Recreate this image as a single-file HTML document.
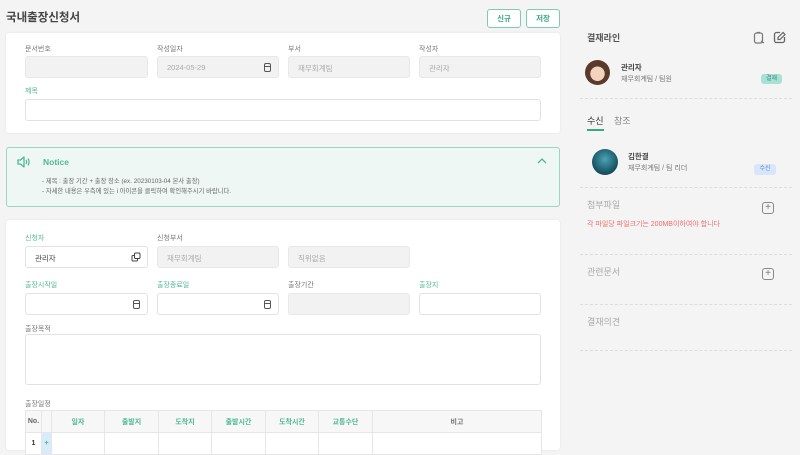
<!DOCTYPE html>
<html><head><meta charset="utf-8"><style>
*{margin:0;padding:0;box-sizing:border-box}
body{width:800px;height:442px;overflow:hidden;background:#f4f4f4;font-family:"Liberation Sans","Noto Sans CJK KR",sans-serif;position:relative;color:#555}
.a{position:absolute;white-space:nowrap}
.card{position:absolute;background:#fff;border-radius:3px;box-shadow:0 0 2px rgba(0,0,0,.08)}
.lb{position:absolute;font-size:7px;color:#777}
.g{color:#4fb894}
.in{position:absolute;height:22px;border:1px solid #e2e2e2;border-radius:3px;background:#fff;font-size:7.5px;color:#aaa;padding:6px 0 0 9px}
.dis{background:#f2f2f2;border-color:#e8e8e8}
.cal{position:absolute;right:7px;top:6px;width:7px;height:9px;border:1.2px solid #555;border-radius:2px}
.cal:before{content:"";position:absolute;left:0;right:0;top:2px;border-top:1px solid #555}
.btn{position:absolute;top:9px;width:34px;height:19px;border:1.3px solid #7ccdb0;border-radius:3px;background:#fff;font-size:7.5px;color:#3aa883;text-align:center;line-height:17px;font-weight:bold}
.dash{position:absolute;left:580px;width:212px;border-top:1px dashed #ddd}
.sec{position:absolute;left:587px;font-size:9px;color:#aaa}
.plus{position:absolute;left:762px;width:12px;height:12px;border:1.3px solid #888;border-radius:3px;font-size:10px;line-height:9px;text-align:center;color:#777}
table{position:absolute;left:25px;top:410px;border-collapse:collapse;font-size:7px}
td{border:1px solid #e6e6e6;height:22px;text-align:center;color:#4fb894;background:#f7f7f7;font-weight:bold}
</style></head><body>
<div class="a" style="left:6px;top:9px;font-size:11.5px;color:#444;font-weight:bold">국내출장신청서</div>
<div class="btn" style="left:487px">신규</div>
<div class="btn" style="left:526px">저장</div>

<div class="card" style="left:6px;top:33px;width:554px;height:100px"></div>
<div class="lb" style="left:25px;top:44px">문서번호</div>
<div class="lb" style="left:157px;top:44px">작성일자</div>
<div class="lb" style="left:288px;top:44px">부서</div>
<div class="lb" style="left:419px;top:44px">작성자</div>
<div class="in dis" style="left:25px;top:56px;width:123px"></div>
<div class="in dis" style="left:157px;top:56px;width:122px">2024-05-29<span class="cal"></span></div>
<div class="in dis" style="left:288px;top:56px;width:122px">재무회계팀</div>
<div class="in dis" style="left:419px;top:56px;width:122px">관리자</div>
<div class="lb g" style="left:25px;top:86px">제목</div>
<div class="in" style="left:25px;top:99px;width:516px"></div>

<div class="a" style="left:6px;top:147px;width:554px;height:60px;background:#eef7f4;border:1.3px solid #96d9bf;border-radius:3px"></div>
<svg class="a" style="left:17px;top:156px" width="14" height="12" viewBox="0 0 14 12"><path d="M1 4h2.5L7 1v10L3.5 8H1z" fill="none" stroke="#4fb894" stroke-width="1.3" stroke-linejoin="round"/><path d="M9 4q1.2 2 0 4M11 2.5q2.2 3.5 0 7" fill="none" stroke="#4fb894" stroke-width="1.2"/></svg>
<div class="a g" style="left:43px;top:157px;font-size:8.5px;font-weight:bold">Notice</div>
<svg class="a" style="left:537px;top:157px" width="10" height="7"><path d="M1 6l4-4 4 4" fill="none" stroke="#4fb894" stroke-width="1.3"/></svg>
<div class="a" style="left:42px;top:177px;font-size:6.3px;color:#666;line-height:10px">- 제목 : 출장 기간 + 출장 장소 (ex. 20230103-04 본사 출장)<br>- 자세한 내용은 우측에 있는 i 아이콘을 클릭하여 확인해주시기 바랍니다.</div>

<div class="card" style="left:6px;top:220px;width:554px;height:230px"></div>
<div class="lb g" style="left:25px;top:233px">신청자</div>
<div class="lb" style="left:157px;top:233px">신청부서</div>
<div class="in" style="left:25px;top:246px;width:123px;color:#444">관리자<svg style="position:absolute;right:6px;top:5px" width="10" height="10"><rect x="1" y="3.5" width="5.5" height="5.5" rx="1" fill="none" stroke="#444"/><rect x="3.5" y="1" width="5.5" height="5.5" rx="1" fill="#fff" stroke="#444"/></svg></div>
<div class="in dis" style="left:157px;top:246px;width:122px">재무회계팀</div>
<div class="in dis" style="left:288px;top:246px;width:122px">직위없음</div>
<div class="lb g" style="left:25px;top:280px">출장시작일</div>
<div class="lb g" style="left:157px;top:280px">출장종료일</div>
<div class="lb" style="left:288px;top:280px">출장기간</div>
<div class="lb g" style="left:419px;top:280px">출장지</div>
<div class="in" style="left:25px;top:293px;width:123px"><span class="cal"></span></div>
<div class="in" style="left:157px;top:293px;width:122px"><span class="cal"></span></div>
<div class="in dis" style="left:288px;top:293px;width:122px"></div>
<div class="in" style="left:419px;top:293px;width:122px"></div>
<div class="lb" style="left:25px;top:324px">출장목적</div>
<div class="in" style="left:25px;top:334px;width:516px;height:51px"></div>
<div class="lb" style="left:25px;top:399px">출장일정</div>
<table>
<tr><td style="width:16px;color:#666">No.</td><td style="width:10px"></td><td style="width:53px">일자</td><td style="width:54px">출발지</td><td style="width:53px">도착지</td><td style="width:54px">출발시간</td><td style="width:53px">도착시간</td><td style="width:54px">교통수단</td><td style="width:169px;color:#777">비고</td></tr>
<tr><td style="background:#fff;color:#333">1</td><td style="background:#d6ecfb">+</td><td style="background:#fff"></td><td style="background:#fff"></td><td style="background:#fff"></td><td style="background:#fff"></td><td style="background:#fff"></td><td style="background:#fff"></td><td style="background:#fff"></td></tr>
</table>

<div class="a" style="left:587px;top:31px;font-size:9px;color:#555;font-weight:bold">결재라인</div>
<svg class="a" style="left:753px;top:31px" width="12" height="13"><rect x="1.5" y="2" width="8" height="10" rx="2" fill="none" stroke="#777" stroke-width="1.2"/><path d="M4 1.5h3M8 10l3 2" stroke="#777" stroke-width="1.2"/></svg>
<svg class="a" style="left:773px;top:31px" width="13" height="13"><path d="M7 1.5H3.5a2 2 0 0 0-2 2v6a2 2 0 0 0 2 2h6a2 2 0 0 0 2-2V6" fill="none" stroke="#666" stroke-width="1.3"/><path d="M5 8.5v-2l5-5 2 2-5 5z" fill="none" stroke="#666" stroke-width="1.2"/></svg>
<div class="a" style="left:585px;top:60px;width:25px;height:25px;border-radius:50%;background:radial-gradient(circle at 50% 55%,#f3d3bd 0 38%,#5a3a2a 40%)"></div>
<div class="a" style="left:621px;top:62px;font-size:7.5px;color:#444;font-weight:bold">관리자</div>
<div class="a" style="left:621px;top:74px;font-size:7px;color:#777">재무회계팀 / 팀원</div>
<div class="a" style="left:761px;top:74px;width:21px;height:10px;background:#a9e1d5;border-radius:3px;font-size:6px;color:#3a8a7a;text-align:center;line-height:10px">결재</div>
<div class="dash" style="top:98px"></div>
<div class="a" style="left:587px;top:114px;font-size:9px;color:#333">수신</div>
<div class="a" style="left:614px;top:114px;font-size:9px;color:#888">참조</div>
<div class="a" style="left:587px;top:129px;width:17px;height:2px;background:#3aa883"></div>
<div class="a" style="left:592px;top:149px;width:26px;height:26px;border-radius:50%;background:radial-gradient(circle at 50% 40%,#4aa3b5,#1c5a6a 60%,#0d2c3a)"></div>
<div class="a" style="left:628px;top:151px;font-size:7.5px;color:#444;font-weight:bold">김한결</div>
<div class="a" style="left:628px;top:163px;font-size:7px;color:#777">재무회계팀 / 팀 리더</div>
<div class="a" style="left:754px;top:164px;width:22px;height:11px;background:#d8e6fb;border-radius:3px;font-size:6px;color:#6a88c2;text-align:center;line-height:11px">수신</div>
<div class="dash" style="top:187px"></div>
<div class="sec" style="top:198px">첨부파일</div>
<div class="plus" style="top:202px">+</div>
<div class="a" style="left:587px;top:219px;font-size:7px;color:#ef6c6c">각 파일당 파일크기는 200MB이하여야 합니다</div>
<div class="dash" style="top:254px"></div>
<div class="sec" style="top:265px">관련문서</div>
<div class="plus" style="top:268px">+</div>
<div class="dash" style="top:304px"></div>
<div class="sec" style="top:315px">결재의견</div>
<div class="dash" style="top:350px"></div>
</body></html>
